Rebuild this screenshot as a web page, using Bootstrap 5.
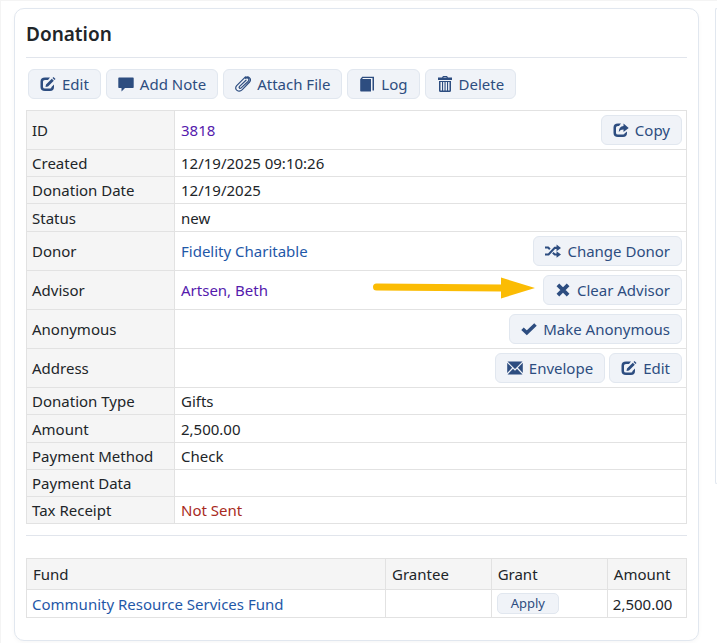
<!DOCTYPE html>
<html lang="en">
<head>
<meta charset="utf-8">
<meta name="viewport" content="width=device-width, initial-scale=1">
<title>Donation</title>
<link rel="stylesheet" href="https://cdn.jsdelivr.net/npm/bootstrap@5.3.0/dist/css/bootstrap.min.css">
<style>
  body { font-family: "Noto Sans", "Open Sans", sans-serif; font-size: 15px; line-height: 20px; color: #212529; background: #fff; border-top: 1px solid #f4f4f4; border-left: 1px solid #f4f4f4; overflow-x: hidden; }
  a { color: #1f58a8; text-decoration: none; }
  a.seen { color: #551aad; }
  .page-area { padding: 7px 0 3px 13px; gap: 16px; }
  .panel { border: 1px solid #e1e7ef; border-radius: 10px; background: #fff; }
  .donation-panel { padding: 11px 11px 22px; box-shadow: 0 2px 4px rgba(0,0,0,.03); }
  .side-panel { flex: 0 0 2px; height: 476px; border-right: 0; border-radius: 10px 0 0 10px; }
  h1 { font-size: 19px; line-height: 28px; font-weight: 600; }
  .rule { border-top: 1px solid #e1e5ec; }
  .title-rule { margin: 9px 0 11px; }
  .fund-rule { margin: 11px 0 22px; }
  .toolbar { padding: 0 2px; gap: 5px; margin-bottom: 11px; }
  .btn-tool { --bs-btn-color: #2d4d80; --bs-btn-bg: #f0f3f8; --bs-btn-border-color: #e1e7ef; --bs-btn-hover-color: #2d4d80; --bs-btn-hover-bg: #e4eaf3; --bs-btn-hover-border-color: #cfd8e5; --bs-btn-border-radius: 6px; --bs-btn-padding-x: 11px; --bs-btn-padding-y: 4px; --bs-btn-font-size: 15px; --bs-btn-line-height: 20px; display: inline-flex; align-items: center; gap: 6px; white-space: nowrap; }
  .btn-apply { --bs-btn-font-size: 13px; --bs-btn-line-height: 17px; --bs-btn-padding-x: 13px; --bs-btn-padding-y: 1px; --bs-btn-border-radius: 5px; vertical-align: top; }
  .btn-tool svg { width: 16px; height: 16px; fill: currentColor; flex: none; }
  .grid-table { --bs-table-color: #212529; border-color: #e2e2e2; vertical-align: middle; }
  .grid-table > :not(caption) > * > * { padding: 3px 6px; font-weight: 400; }
  .grid-table .label-cell { background: #f5f5f5; }
  .details { height: 414px; }
  .details th { width: 148px; }
  .details > tbody > tr > th { padding-left: 5px; }
  .details > tbody > tr.has-action > * { padding-top: 4px; padding-bottom: 4px; padding-right: 4px; }
  .funds > thead > tr > th { padding-top: 5px; padding-bottom: 5px; }
  .funds > tbody > tr > td { padding-left: 5px; padding-right: 5px; }
  .funds .col-fund { width: 54.4%; }
  .funds .col-grantee { width: 16%; }
  .funds .col-grant { width: 17.6%; }
  .funds .col-amount { width: 12%; }
  .actions { gap: 4px; }
  .unsent { color: #a82a22; }
</style>
</head>
<body>
<svg class="d-none" xmlns="http://www.w3.org/2000/svg">
  <symbol id="i-edit" viewBox="0 0 16 16"><path d="M10 1.500H5Q.5 1.500 .5 5.500V11Q.5 15 5 15H10Q14 15 14 11V8.500L11.500 11Q11.500 12.500 10 12.500H5Q3 12.500 3 11V5.500Q3 4 5 4H8Z"/><path d="M6 8.500 11.800 2.700 13.800 4.700 8 10.500 5.500 11ZM12.500 2 13.500 1 15.500 3 14.500 4Z"/></symbol>
  <symbol id="i-note" viewBox="0 0 16 16"><path d="M1 1.500H15Q15.700 1.500 15.700 2.300V11.200Q15.700 12 15 12H7L3.500 15.500V12H1Q.3 12 .3 11.200V2.300Q.3 1.500 1 1.500Z"/></symbol>
  <symbol id="i-clip" viewBox="0 0 16 16"><path fill="none" stroke="currentColor" stroke-width="1.200" stroke-linecap="round" d="M11 4.200 4.600 10.300C3.400 11.600 4.900 13.100 6.200 11.900L13 5.500C15.200 3.200 12.400.5 10.100 2.600L10.900 1.700C13.200-.2 17 2.700 14.600 6L7.300 13.700C3.700 17.300-1.500 13.200 1.700 9.700L9.200 2.200C9.800 1.600 10.300 1.200 10.900.9"/></symbol>
  <symbol id="i-log" viewBox="0 0 16 16"><path d="M1.200 3H12V15.500H2Q1.200 15.500 1.200 14.800V3.200L3.200.8H15V14.500H13.500V2H4L3 3Z"/></symbol>
  <symbol id="i-trash" viewBox="0 0 16 16"><path fill-rule="evenodd" d="M6 0H10L11 1.500H15V4H1V1.500H5ZM6.300 1.500H9.700L9.300 1H6.700ZM2 5H14V14.500Q14 16 12.500 16H3.500Q2 16 2 14.500ZM3.500 6V14.500H5V6ZM6.100 6V14.500H7.500V6ZM8.600 6V14.500H10V6ZM11.100 6V14.500H12.500V6Z"/></symbol>
  <symbol id="i-share" viewBox="0 0 16 16"><path d="M8 1.500H5Q.5 1.500 .5 5.500V11Q.5 15 5 15H10Q14 15 14 11V9.500L11.500 11.500Q11.500 12.500 10 12.500H5Q3 12.500 3 11V5.500Q3 4 5 4H6Z"/><path d="M10.500 1.500 15.700 6 10.500 10V7.600Q7.500 7.500 5.800 10 5.800 4.500 10.500 4Z"/></symbol>
  <symbol id="i-shuffle" viewBox="0 0 18 16"><path fill="none" stroke="currentColor" stroke-width="2.300" d="M0 4H3.500L5.500 6M0 12H4L11 4.500H14M8.800 10 11 12H14"/><path d="M13 .8 18 4.500 13 8.200ZM13 8.200 18 12 13 15.700Z"/></symbol>
  <symbol id="i-cross" viewBox="0 0 16 16"><path fill="none" stroke="currentColor" stroke-width="3.800" d="M2.900 2.900 13.100 13.100M13.100 2.900 2.900 13.100"/></symbol>
  <symbol id="i-check" viewBox="0 0 16 16"><path fill="none" stroke="currentColor" stroke-width="3.600" d="M1.500 7.800 5.800 11.800 14.500 3.500"/></symbol>
  <symbol id="i-mail" viewBox="0 0 16 16"><path d="M.5 1.500H15.500L8 9ZM.2 2.800 5.100 7.800 .2 13ZM15.800 2.800 10.900 7.800 15.800 13ZM.5 14.500 6 8.800 8 10.800 10 8.800 15.500 14.500Z"/></symbol>
</svg>

<div class="page-area d-flex align-items-start">
  <main class="panel donation-panel flex-grow-1">
    <h1 class="mb-0">Donation</h1>
    <div class="rule title-rule"></div>
    <div class="toolbar d-flex flex-wrap">
      <button type="button" class="btn btn-tool"><svg aria-hidden="true"><use href="#i-edit"/></svg>Edit</button>
      <button type="button" class="btn btn-tool"><svg aria-hidden="true"><use href="#i-note"/></svg>Add Note</button>
      <button type="button" class="btn btn-tool"><svg aria-hidden="true"><use href="#i-clip"/></svg>Attach File</button>
      <button type="button" class="btn btn-tool"><svg aria-hidden="true"><use href="#i-log"/></svg>Log</button>
      <button type="button" class="btn btn-tool"><svg aria-hidden="true"><use href="#i-trash"/></svg>Delete</button>
    </div>

    <table class="table table-bordered grid-table details mb-0">
      <tbody>
        <tr class="has-action"><th scope="row" class="label-cell">ID</th><td><div class="d-flex align-items-center actions"><a href="#" class="seen me-auto">3818</a><button type="button" class="btn btn-tool"><svg aria-hidden="true"><use href="#i-share"/></svg>Copy</button></div></td></tr>
        <tr><th scope="row" class="label-cell">Created</th><td>12/19/2025 09:10:26</td></tr>
        <tr><th scope="row" class="label-cell">Donation Date</th><td>12/19/2025</td></tr>
        <tr><th scope="row" class="label-cell">Status</th><td>new</td></tr>
        <tr class="has-action"><th scope="row" class="label-cell">Donor</th><td><div class="d-flex align-items-center actions"><a href="#" class="me-auto">Fidelity Charitable</a><button type="button" class="btn btn-tool"><svg aria-hidden="true"><use href="#i-shuffle"/></svg>Change Donor</button></div></td></tr>
        <tr class="has-action"><th scope="row" class="label-cell">Advisor</th><td><div class="d-flex align-items-center actions"><a href="#" class="seen me-auto">Artsen, Beth</a><svg class="me-1" width="163" height="26" viewBox="0 0 163 26" aria-hidden="true"><path fill="#fbbc04" d="M4.500 6.500 129 7.500V.5L163 11 129 21.500V14.500L4.500 13.500A3.500 3.500 0 0 1 4.500 6.500Z"/></svg><button type="button" class="btn btn-tool"><svg aria-hidden="true"><use href="#i-cross"/></svg>Clear Advisor</button></div></td></tr>
        <tr class="has-action"><th scope="row" class="label-cell">Anonymous</th><td><div class="d-flex justify-content-end actions"><button type="button" class="btn btn-tool"><svg aria-hidden="true"><use href="#i-check"/></svg>Make Anonymous</button></div></td></tr>
        <tr class="has-action"><th scope="row" class="label-cell">Address</th><td><div class="d-flex justify-content-end actions"><button type="button" class="btn btn-tool"><svg aria-hidden="true"><use href="#i-mail"/></svg>Envelope</button><button type="button" class="btn btn-tool"><svg aria-hidden="true"><use href="#i-edit"/></svg>Edit</button></div></td></tr>
        <tr><th scope="row" class="label-cell">Donation Type</th><td>Gifts</td></tr>
        <tr><th scope="row" class="label-cell">Amount</th><td>2,500.00</td></tr>
        <tr><th scope="row" class="label-cell">Payment Method</th><td>Check</td></tr>
        <tr><th scope="row" class="label-cell">Payment Data</th><td></td></tr>
        <tr><th scope="row" class="label-cell">Tax Receipt</th><td class="unsent">Not Sent</td></tr>
      </tbody>
    </table>

    <div class="rule fund-rule"></div>

    <table class="table table-bordered grid-table funds mb-0">
      <thead>
        <tr><th scope="col" class="label-cell col-fund">Fund</th><th scope="col" class="label-cell col-grantee">Grantee</th><th scope="col" class="label-cell col-grant">Grant</th><th scope="col" class="label-cell col-amount">Amount</th></tr>
      </thead>
      <tbody>
        <tr><td><a href="#">Community Resource Services Fund</a></td><td></td><td><button type="button" class="btn btn-tool btn-apply">Apply</button></td><td>2,500.00</td></tr>
      </tbody>
    </table>
  </main>
  <aside class="panel side-panel" aria-label="Related records"></aside>
</div>
<script src="https://cdn.jsdelivr.net/npm/bootstrap@5.3.0/dist/js/bootstrap.bundle.min.js"></script>
</body>
</html>
